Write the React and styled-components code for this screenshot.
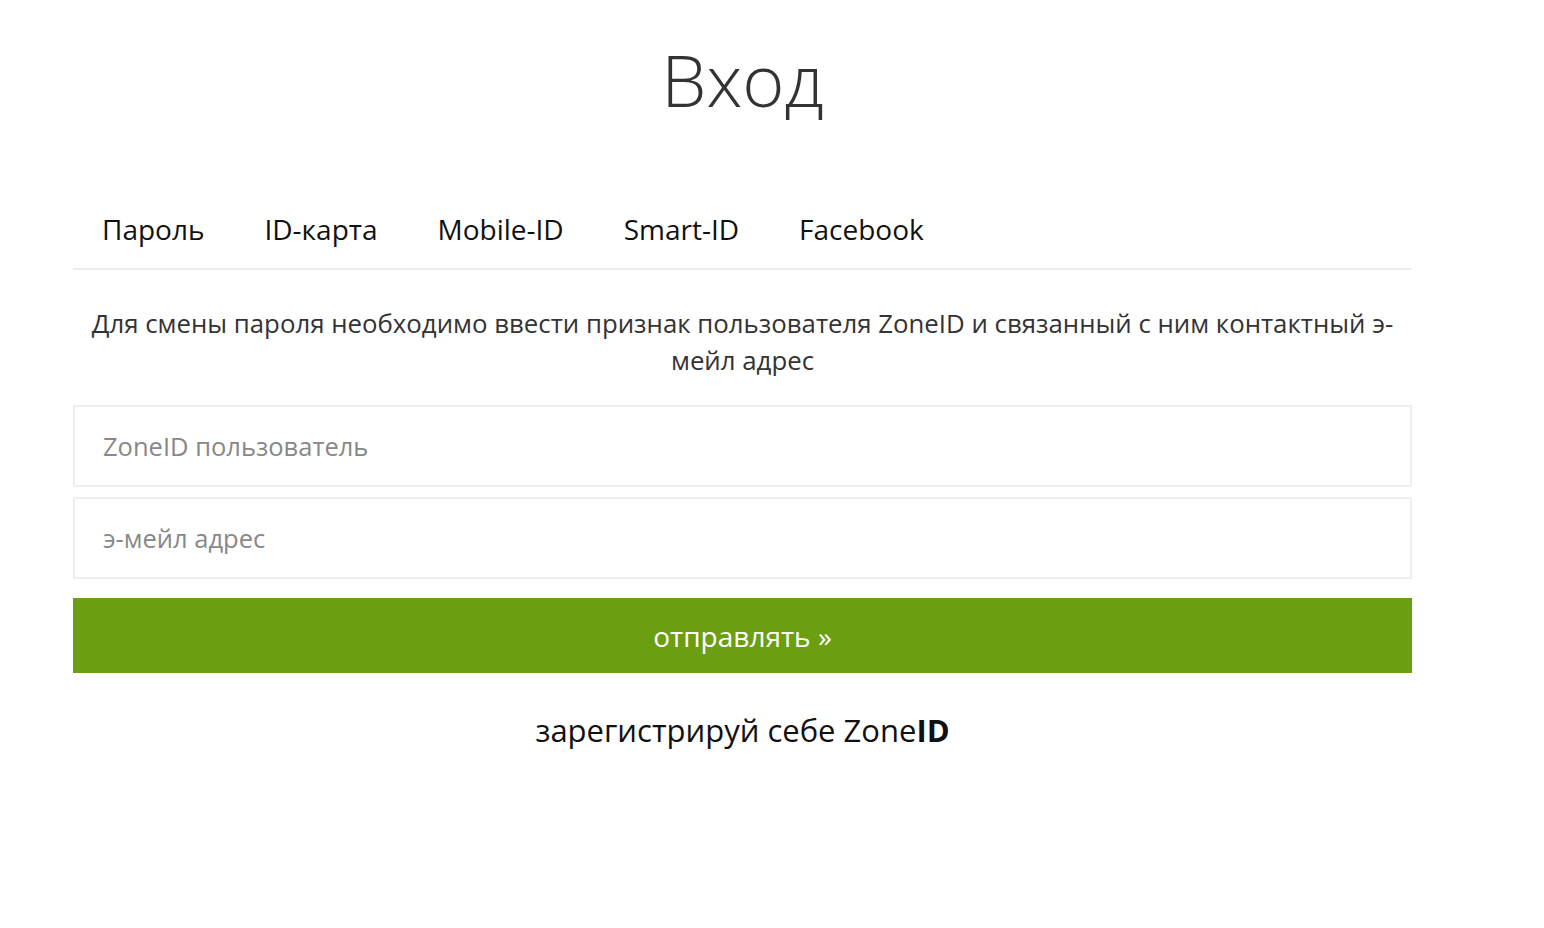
import React from 'react'
import styled, { createGlobalStyle } from 'styled-components'

const GlobalStyle = createGlobalStyle`
  html, body {
    margin: 0;
    padding: 0;
    background: #fff;
    font-family: "Open Sans", "Noto Sans", sans-serif;
  }
`

const Page = styled.div`
  width: 1339px;
  margin-left: 73px;
  padding-top: 34px;
`

const Title = styled.h1`
  margin: 0;
  text-align: center;
  font-size: 72px;
  font-weight: 300;
  color: #333;
  line-height: 90px;
`

const Tabs = styled.ul`
  display: flex;
  list-style: none;
  margin: 85px 0 0;
  padding: 0;
  border-bottom: 2px solid #ececec;
`

const Tab = styled.li`
  padding: 0 29px 19px;
  margin-right: 2px;
  font-size: 28px;
  line-height: 40px;
  color: #111;
  cursor: pointer;
`

const Info = styled.p`
  margin: 35px 0 0;
  padding: 0;
  text-align: center;
  font-size: 25.8px;
  line-height: 37px;
  color: #333;
`

const Form = styled.form`
  display: flex;
  flex-direction: column;
  gap: 10px;
  margin-top: 26px;
`

const Input = styled.input`
  box-sizing: border-box;
  height: 82px;
  width: 100%;
  border: 2px solid #efefef;
  padding: 0 28px;
  font-family: inherit;
  font-size: 25.5px;
  color: #333;
  outline: none;
  &::placeholder {
    color: #888;
  }
`

const Submit = styled.button`
  height: 75px;
  margin-top: 9px;
  border: none;
  background: #6c9e11;
  color: #fff;
  font-family: inherit;
  font-size: 28px;
  cursor: pointer;
`

const Register = styled.a`
  display: block;
  margin-top: 36px;
  text-align: center;
  font-size: 31px;
  color: #111;
  text-decoration: none;
  b {
    font-weight: 700;
  }
`

const tabs = ['Пароль', 'ID-карта', 'Mobile-ID', 'Smart-ID', 'Facebook']

const App = () => {
  return (
    <>
      <GlobalStyle />
      <Page>
        <Title>Вход</Title>
        <Tabs>
          {tabs.map(t => (
            <Tab key={t}>{t}</Tab>
          ))}
        </Tabs>
        <Info>
          Для смены пароля необходимо ввести признак пользователя ZoneID и связанный с ним контактный э-мейл адрес
        </Info>
        <Form onSubmit={e => e.preventDefault()}>
          <Input placeholder="ZoneID пользователь" />
          <Input placeholder="э-мейл адрес" />
          <Submit type="submit">отправлять »</Submit>
        </Form>
        <Register href="#">
          зарегистрируй себе Zone<b>ID</b>
        </Register>
      </Page>
    </>
  )
}

export default App
